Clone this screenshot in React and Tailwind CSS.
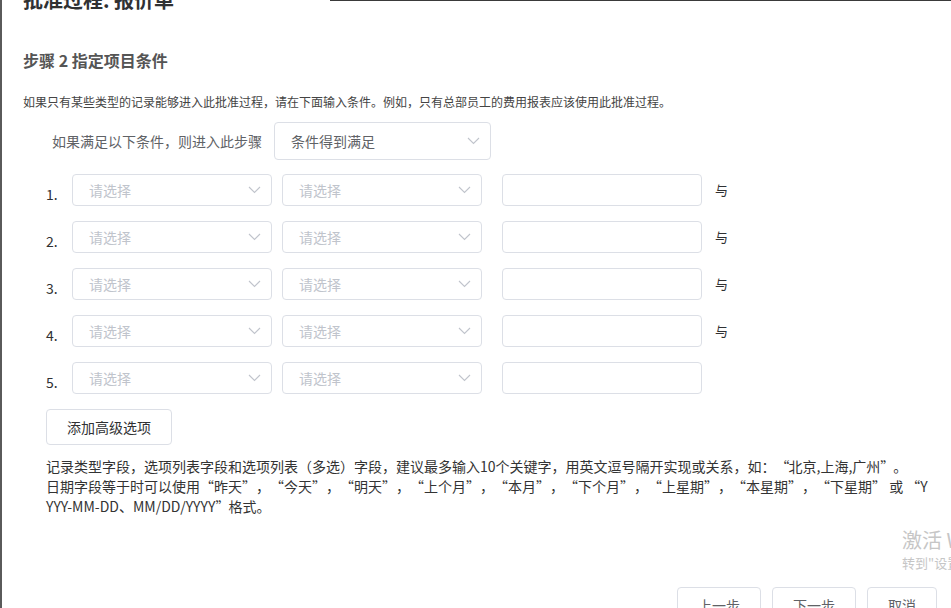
import React from "react";

const FONT = { fontFamily: '"Noto Sans CJK SC", "Noto Sans", sans-serif' };

function Chevron() {
  return (
    <svg width="13" height="8" viewBox="0 0 13 8" fill="none" className="shrink-0">
      <polyline points="1,1 6.5,6.5 12,1" stroke="#c0c4cc" strokeWidth="1.1" fill="none" />
    </svg>
  );
}

function Select({ text, placeholder = true, w = "w-[200px]", h = "h-[32px]" }) {
  return (
    <div
      className={`${w} ${h} shrink-0 flex items-center justify-between border border-[#dcdfe6] rounded-[4px] pl-[16px] pr-[10px] bg-white`}
    >
      <span className={`text-[14px] ${placeholder ? "text-[#c0c4cc]" : "text-[#606266]"}`}>{text}</span>
      <Chevron />
    </div>
  );
}

function Row({ n, last }) {
  return (
    <div className="flex items-center h-[32px]">
      <div className="w-[26px] shrink-0 self-end pb-[2px] text-[14px] text-[#303133] leading-[20px]">{n}.</div>
      <Select text="请选择" />
      <div className="w-[10px]" />
      <Select text="请选择" />
      <div className="w-[20px]" />
      <div className="w-[200px] h-[32px] shrink-0 border border-[#dcdfe6] rounded-[4px] bg-white" />
      {!last && <div className="ml-[13px] text-[13px] text-[#303133]">与</div>}
    </div>
  );
}

function O({ wide }) {
  return <span className={`inline-block ${wide ? "w-[14px]" : "w-[13px]"} text-right`}>“</span>;
}
function C({ wide }) {
  return <span className={`inline-block ${wide ? "w-[14px]" : "w-[13px]"} text-left`}>”</span>;
}
function QW({ children, wide }) {
  return (
    <>
      <O wide={wide} />
      {children}
      <C wide={wide} />
    </>
  );
}

export default function App() {
  const items = ["昨天", "今天", "明天", "上个月", "本月", "下个月", "上星期", "本星期", "下星期"];
  return (
    <div className="relative w-[951px] h-[608px] overflow-hidden bg-white flex" style={FONT}>
      <div className="w-[2px] shrink-0 bg-[#5a5a5a]" />
      <div className="absolute top-0 left-[330px] right-0 h-px bg-[#3a3a3a]" />
      <div className="flex-1 flex flex-col pl-[21px]">
        <div className="mt-[-14px] h-[28px] text-[20px] leading-[28px] font-bold text-[#303133]">批准过程: 报价单</div>
        <div className="mt-[34px] h-[24px] text-[16px] leading-[24px] font-bold text-[#555]">步骤 2 指定项目条件</div>
        <div className="mt-[20px] h-[20px] text-[12px] leading-[20px] text-[#444]">
          如果只有某些类型的记录能够进入此批准过程，请在下面输入条件。例如，只有总部员工的费用报表应该使用此批准过程。
        </div>
        <div className="mt-[10px] flex items-center pl-[29px]">
          <div className="text-[14px] text-[#606266] mr-[12px]">如果满足以下条件，则进入此步骤</div>
          <Select text="条件得到满足" placeholder={false} w="w-[217px]" h="h-[38px]" />
        </div>
        <div className="mt-[14px] pl-[23px] flex flex-col gap-[15px]">
          <Row n={1} />
          <Row n={2} />
          <Row n={3} />
          <Row n={4} />
          <Row n={5} last />
        </div>
        <div className="mt-[15px] pl-[23px]">
          <div className="w-[126px] h-[36px] border border-[#dcdfe6] rounded-[4px] flex items-center justify-center text-[14px] text-[#303133]">
            添加高级选项
          </div>
        </div>
        <div className="mt-[11px] pl-[23px] text-[14px] leading-[20px] text-[#333] whitespace-nowrap">
          <div>
            记录类型字段，选项列表字段和选项列表（多选）字段，建议最多输入10个关键字，用英文逗号隔开实现或关系，如：<QW>北京,上海,广州</QW>。
          </div>
          <div>
            日期字段等于时可以使用
            {items.map((t, i) => (
              <React.Fragment key={t}>
                <QW wide>{t}</QW>
                {i < items.length - 1 ? "，" : ""}
              </React.Fragment>
            ))}
            {" 或 "}
            <O wide />Y
          </div>
          <div>
            YYY-MM-DD、MM/DD/YYYY<C />格式。
          </div>
        </div>
        <div className="mt-[71px] flex justify-end gap-[11px] pr-[14px]">
          <div className="w-[84px] h-[36px] border border-[#dcdfe6] rounded-[4px] flex items-center justify-center text-[14px] text-[#606266]">上一步</div>
          <div className="w-[84px] h-[36px] border border-[#dcdfe6] rounded-[4px] flex items-center justify-center text-[14px] text-[#606266]">下一步</div>
          <div className="w-[70px] h-[36px] border border-[#dcdfe6] rounded-[4px] flex items-center justify-center text-[14px] text-[#606266]">取消</div>
        </div>
      </div>
      <div className="absolute left-[902px] top-[526px] whitespace-nowrap text-[#c6c6c6]">
        <div className="text-[20px] leading-[28px]">激活 Windows</div>
        <div className="text-[13px] leading-[18px]">转到"设置"以激活 Windows。</div>
      </div>
    </div>
  );
}
